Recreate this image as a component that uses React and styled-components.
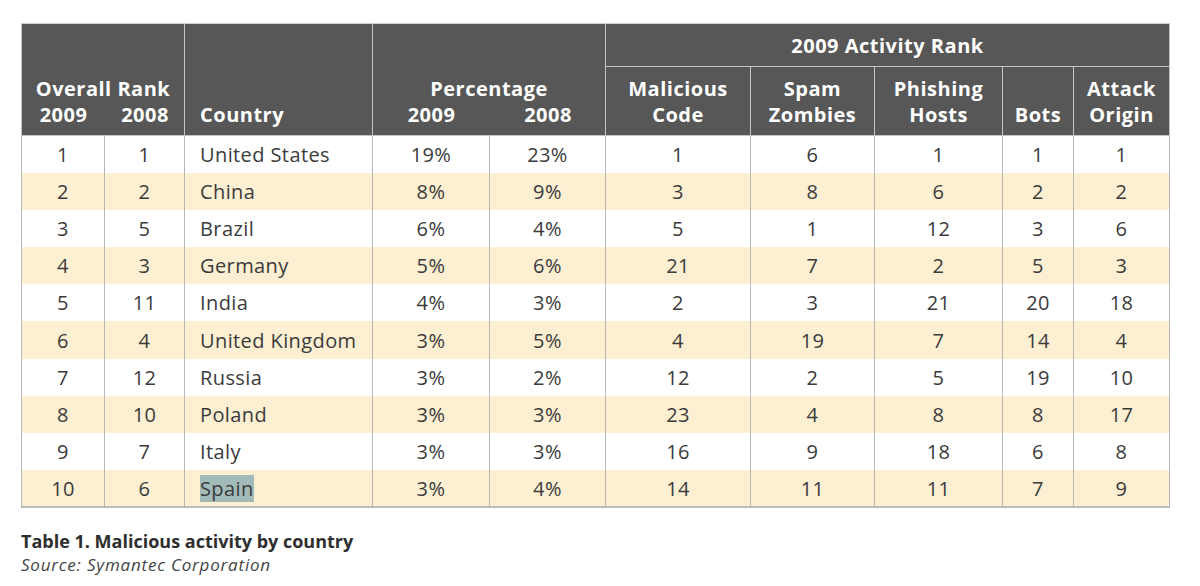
import React from "react";
import styled, { createGlobalStyle } from "styled-components";

const rows = [
  [1, 1, "United States", "19%", "23%", 1, 6, 1, 1, 1],
  [2, 2, "China", "8%", "9%", 3, 8, 6, 2, 2],
  [3, 5, "Brazil", "6%", "4%", 5, 1, 12, 3, 6],
  [4, 3, "Germany", "5%", "6%", 21, 7, 2, 5, 3],
  [5, 11, "India", "4%", "3%", 2, 3, 21, 20, 18],
  [6, 4, "United Kingdom", "3%", "5%", 4, 19, 7, 14, 4],
  [7, 12, "Russia", "3%", "2%", 12, 2, 5, 19, 10],
  [8, 10, "Poland", "3%", "3%", 23, 4, 8, 8, 17],
  [9, 7, "Italy", "3%", "3%", 16, 9, 18, 6, 8],
  [10, 6, "Spain", "3%", "4%", 14, 11, 11, 7, 9],
];

const widths = [83, 80, 188, 117, 116, 145, 124, 128, 71, 96];

const App = () => {
  return (
    <>
      <GlobalStyle />
      <Page>
        <Table>
          <colgroup>
            {widths.map((w, i) => (
              <col key={i} style={{ width: w }} />
            ))}
          </colgroup>
          <thead>
            <HeadRow $h={43}>
              <HeadCell colSpan={2} rowSpan={2}>
                <HeadStack>
                  <span>Overall Rank</span>
                  <SubLabels $cols="83px 80px">
                    <span>2009</span>
                    <span>2008</span>
                  </SubLabels>
                </HeadStack>
              </HeadCell>
              <HeadCell rowSpan={2} $left>
                Country
              </HeadCell>
              <HeadCell colSpan={2} rowSpan={2}>
                <HeadStack>
                  <span>Percentage</span>
                  <SubLabels $cols="117px 116px">
                    <span>2009</span>
                    <span>2008</span>
                  </SubLabels>
                </HeadStack>
              </HeadCell>
              <GroupCell colSpan={5}>2009 Activity Rank</GroupCell>
            </HeadRow>
            <HeadRow $h={69}>
              <HeadCell>
                Malicious
                <br />
                Code
              </HeadCell>
              <HeadCell>
                Spam
                <br />
                Zombies
              </HeadCell>
              <HeadCell>
                Phishing
                <br />
                Hosts
              </HeadCell>
              <HeadCell>Bots</HeadCell>
              <HeadCell>
                Attack
                <br />
                Origin
              </HeadCell>
            </HeadRow>
          </thead>
          <tbody>
            {rows.map((r, i) => (
              <Row key={i} $odd={i % 2 === 1}>
                {r.map((v, j) =>
                  j === 2 ? (
                    <CountryCell key={j}>
                      {v === "Spain" ? <Selected>{v}</Selected> : v}
                    </CountryCell>
                  ) : (
                    <Cell key={j}>{v}</Cell>
                  )
                )}
              </Row>
            ))}
          </tbody>
        </Table>
        <Caption>Table 1. Malicious activity by country</Caption>
        <Source>Source: Symantec Corporation</Source>
      </Page>
    </>
  );
};

export default App;

// styles

const GlobalStyle = createGlobalStyle`
  body {
    margin: 0;
    background: #fff;
    font-family: "Open Sans", "Noto Sans", sans-serif;
  }
`;

const Page = styled.div`
  padding: 23px 0 0 21px;
`;

const Table = styled.table`
  width: 1148px;
  border-collapse: collapse;
  table-layout: fixed;
  border-bottom: 2px solid #bcbcbc;
`;

const HeadRow = styled.tr`
  height: ${(p) => p.$h}px;
`;

const HeadCell = styled.th`
  background: #575757;
  color: #fff;
  font-size: 20px;
  font-weight: 700;
  letter-spacing: 0.5px;
  line-height: 26px;
  vertical-align: bottom;
  text-align: ${(p) => (p.$left ? "left" : "center")};
  padding: 0 ${(p) => (p.$left ? "15px" : "0")} 7px;
  border: 1px solid #c4c4c4;
  border-top: 1px solid #d0d0d0;
`;

const GroupCell = styled.th`
  background: #575757;
  color: #fff;
  font-size: 20px;
  font-weight: 700;
  letter-spacing: 0.5px;
  padding: 0;
  text-align: center;
  border: 1px solid #c4c4c4;
  border-top: 1px solid #d0d0d0;
`;

const HeadStack = styled.div`
  display: flex;
  flex-direction: column;
  align-items: center;
`;

const SubLabels = styled.div`
  display: grid;
  grid-template-columns: ${(p) => p.$cols};
  width: 100%;
  text-align: center;
`;

const Row = styled.tr`
  height: 37.2px;
  background: ${(p) => (p.$odd ? "#fcefd2" : "#ffffff")};
`;

const Cell = styled.td`
  color: #3b3b3b;
  font-size: 20px;
  letter-spacing: 0.4px;
  text-align: center;
  padding: 0;
  border-left: 1px solid #b8b8b8;
  border-right: 1px solid #b8b8b8;
`;

const CountryCell = styled(Cell)`
  text-align: left;
  padding-left: 15px;
`;

const Selected = styled.span`
  background: #a2bbb8;
`;

const Caption = styled.div`
  margin-top: 21px;
  font-size: 18px;
  font-weight: 700;
  letter-spacing: 0;
  color: #2e2e2e;
`;

const Source = styled.div`
  margin-top: 0;
  font-size: 17px;
  font-style: italic;
  letter-spacing: 0.8px;
  color: #444;
`;
